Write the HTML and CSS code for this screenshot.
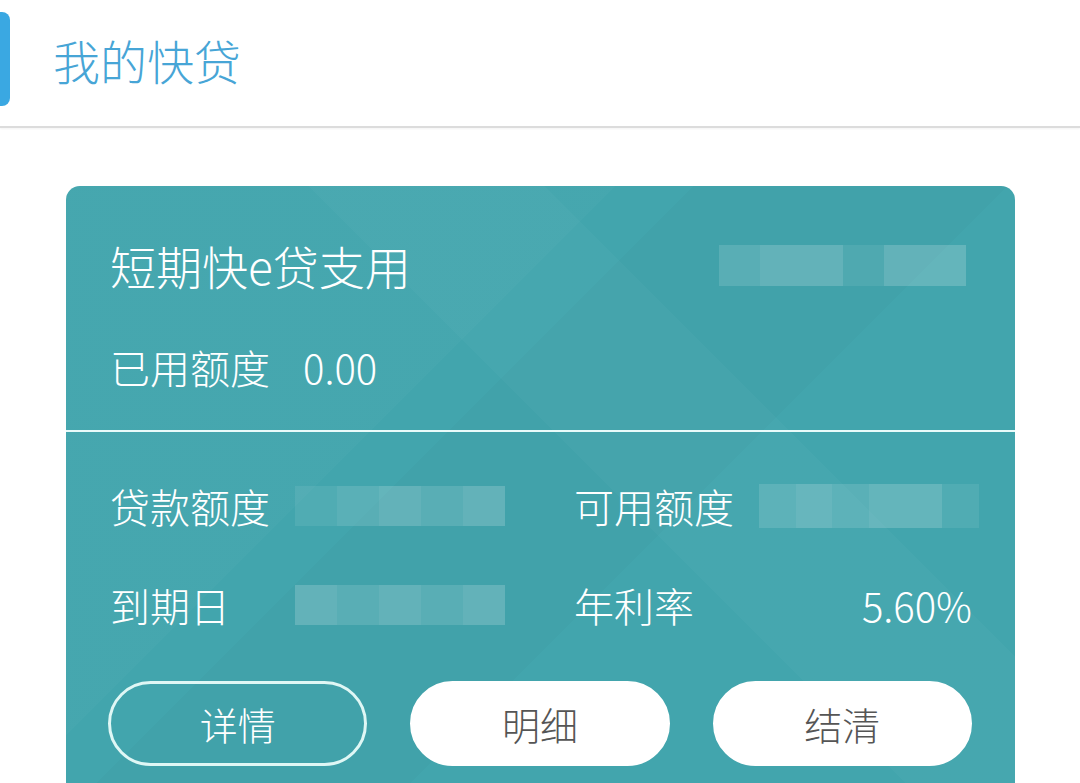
FILE: index.html
```html
<!DOCTYPE html>
<html lang="zh-CN">
<head>
    <meta charset="UTF-8">
    <meta name="viewport" content="width=device-width, initial-scale=1.0">
    <title>我的快贷</title>
    <link rel="stylesheet" href="styles.css">
</head>
<body>

    <header class="top-bar">
        <span class="accent"></span>
        <h1>我的快贷</h1>
    </header>

    <div class="card">
        <div class="card-top">
            <div class="card-title">
                <span>短期快e贷支用</span>
                <span class="blur blur-wide">
                    <i class="c2"></i><i class="c3"></i><i class="c3"></i><i class="c1"></i><i class="c3"></i><i class="c3"></i>
                </span>
            </div>
            <div class="used">
                <span>已用额度</span>
                <span class="used-value">0.00</span>
            </div>
        </div>

        <div class="card-bottom">
            <div class="info-grid">
                <div class="info-item">
                    <span class="label">贷款额度</span>
                    <span class="blur">
                        <i class="c1"></i><i class="c2"></i><i class="c3"></i><i class="c2"></i><i class="c3"></i>
                    </span>
                </div>
                <div class="info-item">
                    <span class="label">可用额度</span>
                    <span class="blur blur-right">
                        <i class="c2"></i><i class="c3"></i><i class="c2"></i><i class="c3"></i><i class="c3"></i><i class="c1"></i>
                    </span>
                </div>
                <div class="info-item">
                    <span class="label">到期日</span>
                    <span class="blur">
                        <i class="c3"></i><i class="c2"></i><i class="c3"></i><i class="c2"></i><i class="c3"></i>
                    </span>
                </div>
                <div class="info-item">
                    <span class="label">年利率</span>
                    <span class="rate">5.60%</span>
                </div>
            </div>

            <div class="actions">
                <button class="btn btn-outline">详情</button>
                <button class="btn">明细</button>
                <button class="btn">结清</button>
            </div>
        </div>
    </div>

</body>
</html>
```

FILE: styles.css
```css
/* Página "我的快贷" */
body {
    margin: 0;
    background-color: #fff;
    font-family: "Noto Sans CJK SC", "Noto Sans", sans-serif;
    font-weight: 300;
    height: 783px;
    overflow: hidden;
}
.top-bar {
    height: 126px;
    display: flex;
    align-items: center;
    border-bottom: 2px solid #dcdcdc;
    box-shadow: 0 1px 2px rgba(0, 0, 0, 0.05);
}
.accent {
    width: 10px;
    height: 94px;
    margin-top: -8px;
    background-color: #3aa8e2;
    border-radius: 0 8px 8px 0;
}
.top-bar h1 {
    margin: -8px 0 0 43px;
    font-size: 47px;
    font-weight: 300;
    color: #47a5d6;
}
.card {
    margin: 58px 65px 0 66px;
    border-radius: 14px 14px 0 0;
    color: #fff;
    background-color: #42a5ad;
    background-image:
        linear-gradient(135deg, rgba(255, 255, 255, 0.02) 0, rgba(255, 255, 255, 0.02) 35%, transparent 35%),
        linear-gradient(45deg, transparent 55%, rgba(255, 255, 255, 0.025) 55%, rgba(255, 255, 255, 0.025) 70%, transparent 70%),
        linear-gradient(-45deg, transparent 40%, rgba(0, 0, 0, 0.02) 40%, rgba(0, 0, 0, 0.02) 60%, transparent 60%);
}
.card-top {
    height: 246px;
    padding: 0 49px 0 44px;
    border-bottom: 2px solid #e8fbfa;
    box-sizing: border-box;
}
.card-title {
    display: flex;
    justify-content: space-between;
    align-items: center;
    height: 60px;
    padding-top: 49px;
    font-size: 46px;
}
.used {
    display: flex;
    align-items: center;
    height: 60px;
    margin-top: 42px;
    font-size: 40px;
}
.used-value {
    margin-left: 33px;
}
.blur {
    display: flex;
    width: 210px;
    height: 40px;
}
.blur i {
    flex: 1;
}
.blur .c1 {
    background-color: rgba(255, 255, 255, 0.08);
}
.blur .c2 {
    background-color: rgba(255, 255, 255, 0.13);
}
.blur .c3 {
    background-color: rgba(255, 255, 255, 0.18);
}
.blur-wide {
    width: 247px;
    height: 41px;
}
.blur-right {
    width: 220px;
    height: 44px;
    margin-right: -8px;
}
.card-bottom {
    padding: 44px 43px 40px 44px;
}
.info-grid {
    display: grid;
    grid-template-columns: 464px 1fr;
    row-gap: 39px;
}
.info-item {
    display: flex;
    align-items: center;
    height: 60px;
    font-size: 40px;
}
.label {
    width: 185px;
    flex-shrink: 0;
}
.rate {
    margin-left: auto;
}
.actions {
    display: flex;
    gap: 43px;
    margin: 46px 0 0 -2px;
}
.btn {
    flex: 1;
    height: 85px;
    border: 3px solid #fff;
    border-radius: 43px;
    background-color: #fff;
    color: #555;
    font-family: inherit;
    font-weight: 300;
    font-size: 38px;
    cursor: pointer;
}
.btn-outline {
    background-color: transparent;
    border-color: #dff7f5;
    color: #fff;
}
```
